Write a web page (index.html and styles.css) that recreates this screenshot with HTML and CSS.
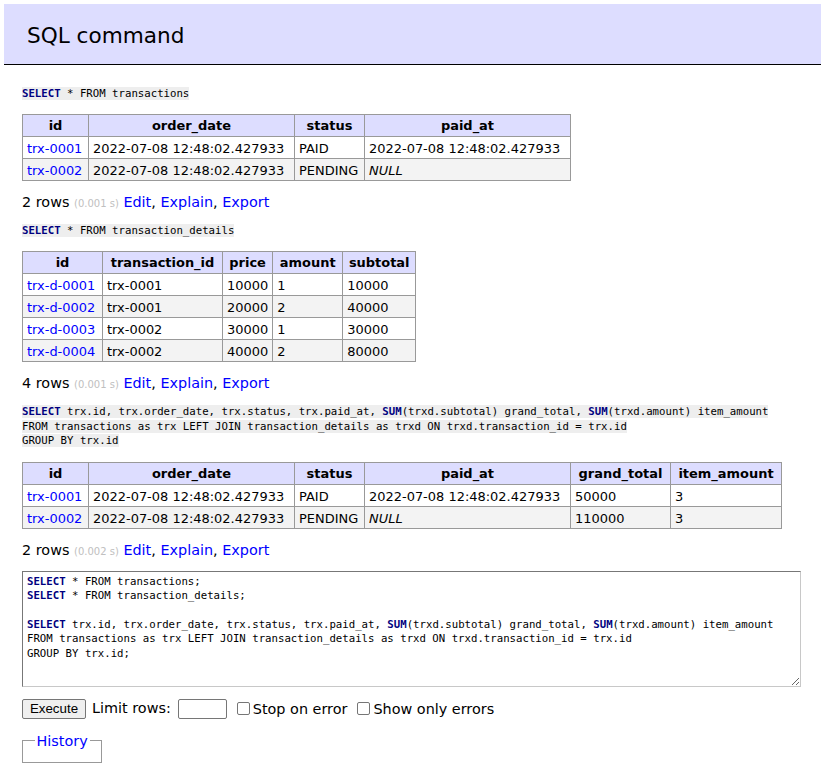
FILE: index.html
```html
<!DOCTYPE html>
<html lang="en">
<head>
<meta charset="utf-8">
<title>SQL command</title>
<link rel="stylesheet" href="styles.css">
</head>
<body>
<h2 class="title">SQL command</h2>
<div class="content">
  <pre class="sql sql1"><code><span class="kw">SELECT</span> * FROM transactions</code></pre>
  <table class="grid t1">
    <colgroup><col class="c66"><col class="c206"><col class="c70"><col class="c206"></colgroup>
    <thead><tr><th>id</th><th>order_date</th><th>status</th><th>paid_at</th></tr></thead>
    <tbody>
      <tr><td><a href="#">trx-0001</a></td><td>2022-07-08 12:48:02.427933</td><td>PAID</td><td>2022-07-08 12:48:02.427933</td></tr>
      <tr><td><a href="#">trx-0002</a></td><td>2022-07-08 12:48:02.427933</td><td>PENDING</td><td><i>NULL</i></td></tr>
    </tbody>
  </table>
  <p class="stats">2 rows <span class="time">(0.001 s)</span> <a href="#">Edit</a>, <a href="#">Explain</a>, <a href="#">Export</a></p>

  <pre class="sql sql2"><code><span class="kw">SELECT</span> * FROM transaction_details</code></pre>
  <table class="grid t2">
    <colgroup><col class="c80"><col class="c120"><col class="c50"><col class="c70"><col class="c73"></colgroup>
    <thead><tr><th>id</th><th>transaction_id</th><th>price</th><th>amount</th><th>subtotal</th></tr></thead>
    <tbody>
      <tr><td><a href="#">trx-d-0001</a></td><td>trx-0001</td><td>10000</td><td>1</td><td>10000</td></tr>
      <tr><td><a href="#">trx-d-0002</a></td><td>trx-0001</td><td>20000</td><td>2</td><td>40000</td></tr>
      <tr><td><a href="#">trx-d-0003</a></td><td>trx-0002</td><td>30000</td><td>1</td><td>30000</td></tr>
      <tr><td><a href="#">trx-d-0004</a></td><td>trx-0002</td><td>40000</td><td>2</td><td>80000</td></tr>
    </tbody>
  </table>
  <p class="stats">4 rows <span class="time">(0.001 s)</span> <a href="#">Edit</a>, <a href="#">Explain</a>, <a href="#">Export</a></p>

  <pre class="sql sql3"><code><span class="kw">SELECT</span> trx.id, trx.order_date, trx.status, trx.paid_at, <span class="kw">SUM</span>(trxd.subtotal) grand_total, <span class="kw">SUM</span>(trxd.amount) item_amount
FROM transactions as trx LEFT JOIN transaction_details as trxd ON trxd.transaction_id = trx.id
GROUP BY trx.id</code></pre>
  <table class="grid t3">
    <colgroup><col class="c66"><col class="c206"><col class="c70"><col class="c206"><col class="c100"><col class="c111"></colgroup>
    <thead><tr><th>id</th><th>order_date</th><th>status</th><th>paid_at</th><th>grand_total</th><th>item_amount</th></tr></thead>
    <tbody>
      <tr><td><a href="#">trx-0001</a></td><td>2022-07-08 12:48:02.427933</td><td>PAID</td><td>2022-07-08 12:48:02.427933</td><td>50000</td><td>3</td></tr>
      <tr><td><a href="#">trx-0002</a></td><td>2022-07-08 12:48:02.427933</td><td>PENDING</td><td><i>NULL</i></td><td>110000</td><td>3</td></tr>
    </tbody>
  </table>
  <p class="stats">2 rows <span class="time">(0.002 s)</span> <a href="#">Edit</a>, <a href="#">Explain</a>, <a href="#">Export</a></p>

  <pre class="editor" contenteditable="true" spellcheck="false"><span class="kw">SELECT</span> * FROM transactions;
<span class="kw">SELECT</span> * FROM transaction_details;

<span class="kw">SELECT</span> trx.id, trx.order_date, trx.status, trx.paid_at, <span class="kw">SUM</span>(trxd.subtotal) grand_total, <span class="kw">SUM</span>(trxd.amount) item_amount
FROM transactions as trx LEFT JOIN transaction_details as trxd ON trxd.transaction_id = trx.id
GROUP BY trx.id;</pre>

  <div class="actions">
    <button type="button" class="btn">Execute</button>
    <span class="limit-label">Limit rows:</span>
    <input type="text" class="limit">
    <label class="check"><input type="checkbox">Stop on error</label>
    <label class="check"><input type="checkbox">Show only errors</label>
  </div>

  <fieldset class="history">
    <legend><a href="#">History</a></legend>
  </fieldset>
</div>
</body>
</html>
```

FILE: styles.css
```css
* { box-sizing: border-box; }

body {
  margin: 0;
  font: 14.4px/18px "DejaVu Sans", Verdana, sans-serif;
  color: #000;
  background: #fff;
}

a { color: #00f; text-decoration: none; }

.title {
  margin: 4px 0 0 4px;
  width: 817px;
  height: 61px;
  padding: 2px 23px 0;
  background: #ddf;
  border-bottom: 1px solid #000;
  font-size: 21.6px;
  font-weight: normal;
  line-height: 60px;
  overflow: hidden;
}

.content { padding: 0 0 20px 22px; }

.sql {
  margin: 0;
  font: 10.7px/14.5px "DejaVu Sans Mono", "Liberation Mono", monospace;
  white-space: pre;
}
.sql code { background: #eee; font: inherit; }
.sql1 { margin-top: 22px; }
.sql2 { margin-top: 11px; }
.sql3 { margin-top: 11px; }

.kw { color: #000080; font-weight: bold; }

.grid {
  border-collapse: collapse;
  table-layout: fixed;
  font-size: 12.96px;
  line-height: 17px;
  margin-top: 12px;
}
.t2 { margin-top: 13px; }
.t3 { margin-top: 13px; }
.grid th, .grid td {
  border: 1px solid #999;
  padding: 2px 4px;
  white-space: nowrap;
  overflow: hidden;
}
.grid td { padding-top: 3px; padding-bottom: 1px; }
.grid th {
  background: #ddf;
  text-align: center;
  font-weight: bold;
  padding: 2px 5px;
}
.grid tbody tr:nth-child(2n) td { background: #f3f3f3; }

.c50 { width: 50px; }
.c66 { width: 66px; }
.c70 { width: 70px; }
.c73 { width: 73px; }
.c80 { width: 80px; }
.c100 { width: 100px; }
.c111 { width: 111px; }
.c120 { width: 120px; }
.c206 { width: 206px; }

.stats { margin: 12px 0 0; }
.time { color: silver; font-size: 10px; }

.editor {
  margin: 10px 0 0;
  width: 779px;
  height: 116px;
  padding: 3px 3px 2px 4px;
  border: 1px solid;
  border-color: #777 #c8c8c8 #c8c8c8 #777;
  font: 10.7px/14.4px "DejaVu Sans Mono", "Liberation Mono", monospace;
  white-space: pre;
  overflow: auto;
  resize: both;
  outline: none;
  background: #fff;
}

.actions {
  margin-top: 12px;
  display: flex;
  align-items: center;
  height: 20px;
}
.btn {
  width: 64px;
  height: 20px;
  padding: 0 6px;
  font: 13.33px "Liberation Sans", Arial, sans-serif;
  color: #000;
  background: #efefef;
  border: 1px solid #767676;
  border-radius: 2px;
}
.limit-label { margin-left: 6px; margin-top: -2px; }
.limit {
  margin-left: 7px;
  width: 49px;
  height: 20px;
  border: 1px solid #767676;
  border-radius: 2px;
  font: 13.33px "Liberation Sans", Arial, sans-serif;
}
.check {
  display: flex;
  align-items: center;
  margin-left: 10px;
}
.check input {
  appearance: none;
  -webkit-appearance: none;
  width: 13px;
  height: 13px;
  margin: 0 3px 0 0;
  border: 1px solid #767676;
  border-radius: 2px;
  background: #fff;
}

.history {
  display: inline-block;
  margin: 13px 0 0;
  padding: 6px 11.5px;
  border: 1px solid #999;
  min-width: 0;
}
.history legend { padding: 0 2px; }
```
